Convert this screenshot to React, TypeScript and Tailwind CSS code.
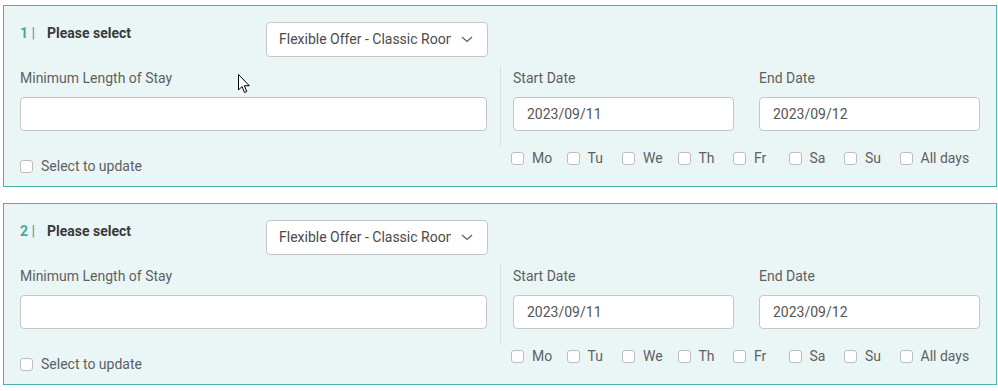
import React from 'react';

const days = ['Mo', 'Tu', 'We', 'Th', 'Fr', 'Sa', 'Su', 'All days'];

function Box() {
  return <span className="w-[13px] h-[13px] shrink-0 rounded-[3px] border border-[#bdbdbd] bg-white" />;
}

function Field({ value }: { value?: string }) {
  return (
    <div className="h-[34px] w-full rounded-[4px] border border-[#c6c6c6] bg-white pl-[13px] flex items-center text-[14px] text-[#555]">
      {value}
    </div>
  );
}

function OfferCard({ index }: { index: number }) {
  return (
    <div className="w-[994px] border border-[#4cb2ae] bg-[#eaf6f6] px-4 pt-4 pb-[10px]">
      {/* Header */}
      <div className="flex items-start">
        <div className="w-[246px] pt-[1px] flex items-center text-[14px] font-bold leading-[20px]">
          <span className="text-[#4aa9a8] w-[27px]">{index} |</span>
          <span className="text-[#3a3a3a]">Please select</span>
        </div>
        <div className="w-[222px] h-[35px] rounded-[4px] border border-[#c6c6c6] bg-white flex items-center pl-[12px] pr-[14px]">
          <span className="w-[172px] overflow-hidden whitespace-nowrap text-[14px] text-[#4a4a4a]">
            Flexible Offer - Classic Room
          </span>
          <svg className="ml-auto" width="12" height="7" viewBox="0 0 12 7" fill="none">
            <path d="M1 1l5 4.5L11 1" stroke="#6b5b70" strokeWidth="1.3" />
          </svg>
        </div>
      </div>

      {/* Body */}
      <div className="mt-[10px] flex">
        <div className="w-[467px]">
          <div className="pt-px text-[14px] leading-[20px] text-[#5f5f5f]">Minimum Length of Stay</div>
          <div className="mt-[9px]">
            <Field />
          </div>
          <div className="mt-[25px] flex items-center gap-2 h-[20px]">
            <Box />
            <span className="text-[14px] text-[#5f5f5f]">Select to update</span>
          </div>
        </div>

        <div className="ml-[13px] flex-1">
          <div className="border-l border-[#d6dede] pl-3 pb-4 flex gap-[25px]">
            <div className="flex-1">
              <div className="pt-px text-[14px] leading-[20px] text-[#5f5f5f]">Start Date</div>
              <div className="mt-[9px]">
                <Field value="2023/09/11" />
              </div>
            </div>
            <div className="flex-1">
              <div className="pt-px text-[14px] leading-[20px] text-[#5f5f5f]">End Date</div>
              <div className="mt-[9px]">
                <Field value="2023/09/12" />
              </div>
            </div>
          </div>
          <div className="mt-[1px] -ml-px pl-[12px] flex h-[20px] items-center">
            {days.map((d) => (
              <div key={d} className="w-[55.5px] shrink-0 flex items-center gap-2">
                <Box />
                <span className="text-[14px] text-[#5f5f5f] whitespace-nowrap">{d}</span>
              </div>
            ))}
          </div>
        </div>
      </div>
    </div>
  );
}

function App() {
  return (
    <div className="relative min-h-screen bg-white pl-[3px] pt-[5px] font-['Roboto',sans-serif]">
      <div className="flex flex-col gap-4">
        <OfferCard index={1} />
        <OfferCard index={2} />
      </div>

      {/* mouse pointer */}
      <svg className="absolute left-[238px] top-[74px]" width="13" height="20" viewBox="0 0 13 20">
        <path
          d="M0.5 0.5 L0.5 16 L4 12.5 L6.5 18.5 L8.8 17.5 L6.3 11.7 L11.3 11.7 Z"
          fill="#fff"
          stroke="#000"
          strokeWidth="1"
          strokeLinejoin="round"
        />
      </svg>
    </div>
  );
}

export default App;
